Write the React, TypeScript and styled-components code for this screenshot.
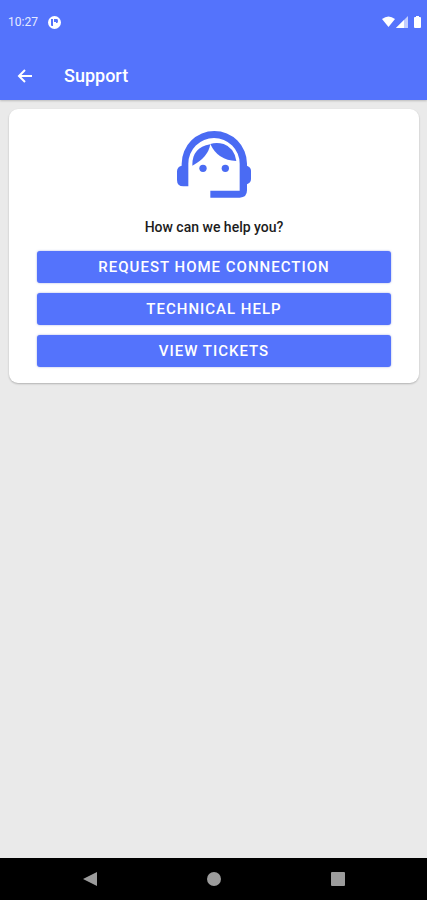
import React from "react";
import styled, { createGlobalStyle } from "styled-components";

const BLUE = "#5473fc";
const ICON_BLUE = "#4a6bf3";

const GlobalStyle = createGlobalStyle`
  *, *::before, *::after { box-sizing: border-box; }
  body {
    margin: 0;
    background: #eaeaea;
    font-family: Roboto, "Liberation Sans", sans-serif;
  }
`;

const Screen = styled.div`
  display: flex;
  flex-direction: column;
  min-height: 100vh;
`;

const Header = styled.header`
  background: ${BLUE};
  color: #fff;
  box-shadow: 0 1px 2px rgba(0, 0, 0, 0.2);
`;

const StatusBar = styled.div`
  display: flex;
  align-items: center;
  justify-content: space-between;
  height: 44px;
  padding: 0 6px 0 8px;
`;

const StatusGroup = styled.div<{ $gap: number }>`
  display: flex;
  align-items: center;
  gap: ${({ $gap }) => $gap}px;
`;

const Clock = styled.span`
  font-size: 12px;
  line-height: 16px;
  color: #e6ebff;
`;

const AppBar = styled.div`
  display: flex;
  align-items: center;
  gap: 24px;
  height: 56px;
  padding: 8px 10px 0;
`;

const IconButton = styled.button`
  display: flex;
  align-items: center;
  justify-content: center;
  width: 30px;
  height: 32px;
  padding: 0;
  border: 0;
  background: none;
  color: inherit;
  cursor: pointer;
`;

const Title = styled.h1`
  margin: 0;
  font-size: 18px;
  line-height: 24px;
  font-weight: 500;
`;

const Main = styled.main`
  flex: 1;
  padding: 9px 8px 9px 9px;
`;

const Card = styled.section`
  display: flex;
  flex-direction: column;
  align-items: center;
  padding: 22px 28px 16px;
  border-radius: 9px;
  background: #fff;
  box-shadow: 0 1px 2px rgba(0, 0, 0, 0.24);
`;

const Question = styled.h2`
  margin: 19px 0 14px;
  font-size: 14px;
  line-height: 20px;
  font-weight: 500;
  color: #1c1c1c;
`;

const Actions = styled.div`
  display: flex;
  flex-direction: column;
  gap: 10px;
  width: 100%;
`;

const ActionButton = styled.button`
  height: 32px;
  padding: 0 12px;
  border: 0;
  border-radius: 3px;
  background: ${BLUE};
  box-shadow: 0 0 2px rgba(60, 80, 200, 0.5);
  color: #fff;
  font: 500 15px/20px Roboto, "Liberation Sans", sans-serif;
  letter-spacing: 1px;
  text-transform: uppercase;
  cursor: pointer;
`;

const NavBar = styled.nav`
  display: flex;
  justify-content: center;
  gap: 94px;
  height: 42px;
  align-items: center;
  background: #000;
  color: #9c9c9c;
`;

const AgentIcon = () => (
  <svg width="74" height="67" viewBox="36 32 222 201" fill={ICON_BLUE} aria-hidden="true">
    <path d="M50 136V130A98 98 0 0 1 246 130V136Q258 141 258 151V176Q258 187 246 192V210Q246 232 224 232H136V211H224V130A77 77 0 0 0 70 130V198H55Q36 198 36 179V153Q36 140 50 136Z" />
    <path d="M136 72Q129 112 82 136Q80 82 136 72Z" />
    <path d="M136 71Q154 65 176 71Q208 82 214 122Q158 120 136 71Z" />
    <circle cx="114" cy="144" r="11" />
    <circle cx="181" cy="144" r="11" />
  </svg>
);

const actions = ["Request home connection", "Technical help", "View tickets"];

export default function App() {
  return (
    <Screen>
      <GlobalStyle />
      <Header>
        <StatusBar>
          <StatusGroup $gap={10}>
            <Clock>10:27</Clock>
            <svg width="13" height="13" viewBox="0 0 13 13" aria-hidden="true">
              <circle cx="6.500" cy="6.500" r="6.500" fill="#fff" />
              <path d="M3 3H5V10H4Q3 10 3 9ZM6 3H9Q10 3 10 5Q10 7 9 7H8V6H6Z" fill={BLUE} />
            </svg>
          </StatusGroup>
          <StatusGroup $gap={1}>
            <svg width="13" height="12" viewBox="0 0 13 12" fill="#fff" aria-hidden="true">
              <path d="M0 3Q6.500-2 13 3L6.500 11Z" />
            </svg>
            <svg width="12" height="12" viewBox="0 0 12 12" fill="#fff" aria-hidden="true">
              <path d="M0 12L12 0V12Z" opacity=".65" />
              <path d="M0 12L8 4V12Z" />
            </svg>
            <svg width="12" height="12" viewBox="0 0 12 12" fill="#fff" aria-hidden="true">
              <path d="M6 1H7V0H10V1H11Q12 1 12 2V11Q12 12 11 12H6Q5 12 5 11V2Q5 1 6 1Z" />
            </svg>
          </StatusGroup>
        </StatusBar>
        <AppBar>
          <IconButton type="button" aria-label="Back">
            <svg width="16" height="16" viewBox="0 0 16 16" fill="none" stroke="currentColor" strokeWidth="2" aria-hidden="true">
              <path d="M15 8H2M8 2L2 8L8 14" />
            </svg>
          </IconButton>
          <Title>Support</Title>
        </AppBar>
      </Header>
      <Main>
        <Card>
          <AgentIcon />
          <Question>How can we help you?</Question>
          <Actions>
            {actions.map((label) => (
              <ActionButton key={label} type="button">
                {label}
              </ActionButton>
            ))}
          </Actions>
        </Card>
      </Main>
      <NavBar aria-label="System navigation">
        <IconButton type="button" aria-label="System back">
          <svg width="14" height="16" viewBox="0 0 14 16" fill="currentColor" aria-hidden="true">
            <path d="M14 1V15L0 8Z" />
          </svg>
        </IconButton>
        <IconButton type="button" aria-label="Home">
          <svg width="14" height="14" viewBox="0 0 14 14" fill="currentColor" aria-hidden="true">
            <circle cx="7" cy="7" r="7" />
          </svg>
        </IconButton>
        <IconButton type="button" aria-label="Recent apps">
          <svg width="14" height="14" viewBox="0 0 14 14" fill="currentColor" aria-hidden="true">
            <rect width="14" height="14" rx="1" />
          </svg>
        </IconButton>
      </NavBar>
    </Screen>
  );
}
